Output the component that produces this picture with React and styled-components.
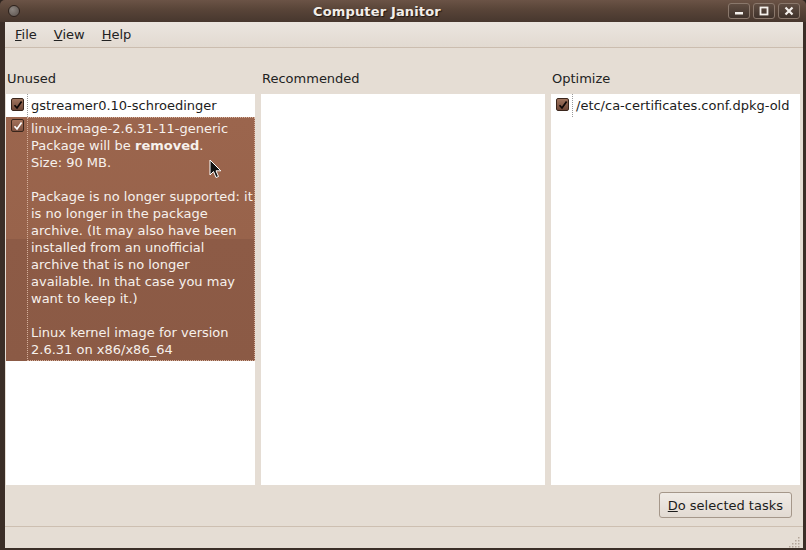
import React from 'react'
import styled, { createGlobalStyle } from 'styled-components'

const GlobalStyle = createGlobalStyle`
  html, body {
    margin: 0;
    padding: 0;
    background: #2e241f;
  }
  body {
    font-family: "DejaVu Sans", "Liberation Sans", sans-serif;
    font-size: 13px;
  }
`

const Window = styled.div`
  position: relative;
  width: 806px;
  height: 550px;
  display: flex;
  flex-direction: column;
  background: #3b2e27;
  border-radius: 5px 5px 0 0;
  overflow: hidden;
`
const TitleBar = styled.div`
  flex: none;
  height: 22px;
  display: grid;
  grid-template-columns: 305px auto 1fr;
  align-items: center;
  padding: 0 6px 0 8px;
  background: linear-gradient(#6b5346 0%, #584438 45%, #47372e 100%);
`
const MenuCircle = styled.div`
  width: 10px;
  height: 10px;
  border-radius: 50%;
  border: 1px solid #2c211c;
  background: radial-gradient(circle at 35% 35%, #8c8580, #5a514c);
`
const Title = styled.div`
  font-weight: bold;
  font-size: 13px;
  letter-spacing: 0.15px;
  color: #f2ede8;
  text-shadow: 1px 1px 1px #1e1612;
`
const Buttons = styled.div`
  display: flex;
  justify-content: flex-end;
  gap: 3px;
`
const WinButton = styled.div`
  width: 20px;
  height: 14px;
  border: 1px solid #8a786c;
  border-radius: 3px;
  background: linear-gradient(#5f4d42, #3f322b);
  display: flex;
  align-items: center;
  justify-content: center;
  color: #f4f0ec;
`
const Client = styled.div`
  flex: 1;
  margin: 0 3px 2px 5px;
  background: #e5ddd4;
  display: flex;
  flex-direction: column;
  color: #1c1c1c;
`
const MenuBar = styled.div`
  flex: none;
  height: 25px;
  display: flex;
  align-items: center;
  gap: 1px;
  padding-left: 2px;
  background: linear-gradient(#ebe5df, #e2dad1);
  border-bottom: 1px solid #cbbdaf;
`
const MenuItem = styled.div`
  padding: 0 8px;
  line-height: 17px;
  color: #222;
`
const Columns = styled.div`
  flex: 1;
  display: grid;
  grid-template-columns: 249px 284px 249px;
  column-gap: 6px;
  padding-left: 1px;
  min-height: 0;
`
const Pane = styled.div`
  display: flex;
  flex-direction: column;
  min-height: 0;
`
const PaneLabel = styled.div`
  padding: 22px 0 0 1px;
  height: 24px;
  line-height: 17px;
  color: #222;
`
const List = styled.div`
  flex: 1;
  background: #fff;
`
const Row = styled.div`
  display: flex;
  align-items: flex-start;
  background: ${p => p.$selected
    ? 'linear-gradient(#9b654d 0%, #98634b 50%, #8d5b46 50%, #8b5a45 100%)'
    : 'transparent'};
  color: ${p => p.$selected ? '#f7f1ec' : '#1c1c1c'};
`
const CheckCell = styled.div`
  flex: none;
  width: 21px;
  padding: ${p => p.$selected ? '2px' : '4px'} 0 0 5px;
  box-sizing: border-box;
`
const Box = styled.div`
  width: 11px;
  height: 11px;
  border: 1px solid #3a261c;
  border-radius: 2px;
  background: ${p => p.$selected
    ? 'linear-gradient(#a4725b, #7d5140)'
    : 'linear-gradient(#a0755f, #6e4636)'};
  display: flex;
  align-items: center;
  justify-content: center;
`
const TextCell = styled.div`
  flex: 1;
  padding: 3px 0 3px 3px;
  line-height: 17px;
  white-space: pre;
  overflow: hidden;
  border-left: 1px dotted ${p => p.$selected ? '#d6b09c' : '#9a9a9a'};
  ${p => p.$selected && `
    border: 1px dotted #d6b09c;
    padding: 2px 0 2px 3px;
  `}
`
const Bottom = styled.div`
  flex: none;
  display: flex;
  justify-content: flex-end;
  padding: 7px 11px 8px 0;
`
const ActionButton = styled.div`
  height: 24px;
  padding: 0 8px;
  display: flex;
  align-items: center;
  border: 1px solid #a5978a;
  border-radius: 3px;
  background: linear-gradient(#f0ebe6, #e2dad2);
  color: #1c1c1c;
`
const StatusBar = styled.div`
  flex: none;
  height: 21px;
  border-top: 1px solid #cdbfb1;
  display: flex;
  justify-content: flex-end;
  align-items: flex-end;
  padding-right: 2px;
`
const Cursor = styled.svg`
  position: absolute;
  left: 209px;
  top: 159px;
`

const Check = ({ color }) => (
  <svg width="10" height="10" viewBox="0 0 10 10">
    <path d="M1.5 5.2 L4 8 L8.6 1.4" fill="none" stroke={color} strokeWidth="1.7" />
  </svg>
)

const Checkbox = ({ selected }) => (
  <Box $selected={selected}>
    <Check color={selected ? '#ffffff' : '#0c0605'} />
  </Box>
)

const U = ({ children }) => <span style={{ textDecoration: 'underline' }}>{children}</span>

const packages = {
  unused: [
    { name: 'gstreamer0.10-schroedinger' },
    {
      name: 'linux-image-2.6.31-11-generic',
      selected: true,
    },
  ],
  optimize: [{ name: '/etc/ca-certificates.conf.dpkg-old' }],
}

const details = `
Size: 90 MB.

Package is no longer supported: it
is no longer in the package
archive. (It may also have been
installed from an unofficial
archive that is no longer
available. In that case you may
want to keep it.)

Linux kernel image for version
2.6.31 on x86/x86_64`

function PackageRow({ pkg }) {
  return (
    <Row $selected={pkg.selected}>
      <CheckCell $selected={pkg.selected}>
        <Checkbox selected={pkg.selected} />
      </CheckCell>
      <TextCell $selected={pkg.selected}>
        {pkg.name}
        {pkg.selected && (
          <>
            {'\nPackage will be '}<b>removed</b>.{details}
          </>
        )}
      </TextCell>
    </Row>
  )
}

export default function App() {
  return (
    <>
      <GlobalStyle />
      <Window>
        <TitleBar>
          <MenuCircle />
          <Title>Computer Janitor</Title>
          <Buttons>
            <WinButton>
              <svg width="10" height="10" viewBox="0 0 10 10"><rect x="1" y="6" width="8" height="2.5" fill="currentColor" /></svg>
            </WinButton>
            <WinButton>
              <svg width="10" height="10" viewBox="0 0 10 10"><rect x="1.5" y="1.5" width="7" height="7" fill="none" stroke="currentColor" strokeWidth="1.8" /></svg>
            </WinButton>
            <WinButton>
              <svg width="10" height="10" viewBox="0 0 10 10"><path d="M1.5 1.5 L8.5 8.5 M8.5 1.5 L1.5 8.5" stroke="currentColor" strokeWidth="2.2" /></svg>
            </WinButton>
          </Buttons>
        </TitleBar>
        <Client>
          <MenuBar>
            <MenuItem><U>F</U>ile</MenuItem>
            <MenuItem><U>V</U>iew</MenuItem>
            <MenuItem><U>H</U>elp</MenuItem>
          </MenuBar>
          <Columns>
            <Pane>
              <PaneLabel>Unused</PaneLabel>
              <List>
                {packages.unused.map(p => <PackageRow key={p.name} pkg={p} />)}
              </List>
            </Pane>
            <Pane>
              <PaneLabel>Recommended</PaneLabel>
              <List />
            </Pane>
            <Pane>
              <PaneLabel>Optimize</PaneLabel>
              <List>
                {packages.optimize.map(p => <PackageRow key={p.name} pkg={p} />)}
              </List>
            </Pane>
          </Columns>
          <Bottom>
            <ActionButton><U>D</U>o selected tasks</ActionButton>
          </Bottom>
          <StatusBar>
            <svg width="12" height="12" viewBox="0 0 12 12">
              {[[10, 2], [10, 5], [7, 5], [10, 8], [7, 8], [4, 8], [10, 11], [7, 11], [4, 11], [1, 11]].map(([x, y]) => (
                <rect key={x + '-' + y} x={x - 1} y={y - 1} width="1.5" height="1.5" fill="#b3a699" />
              ))}
            </svg>
          </StatusBar>
        </Client>
        <Cursor width="13" height="20" viewBox="0 0 13 20">
          <path d="M1 1 L1 16 L4.5 12.5 L7 18.5 L9.5 17.5 L7 11.8 L11.8 11.8 Z" fill="#111" stroke="#fff" strokeWidth="1" strokeLinejoin="round" />
        </Cursor>
      </Window>
    </>
  )
}
